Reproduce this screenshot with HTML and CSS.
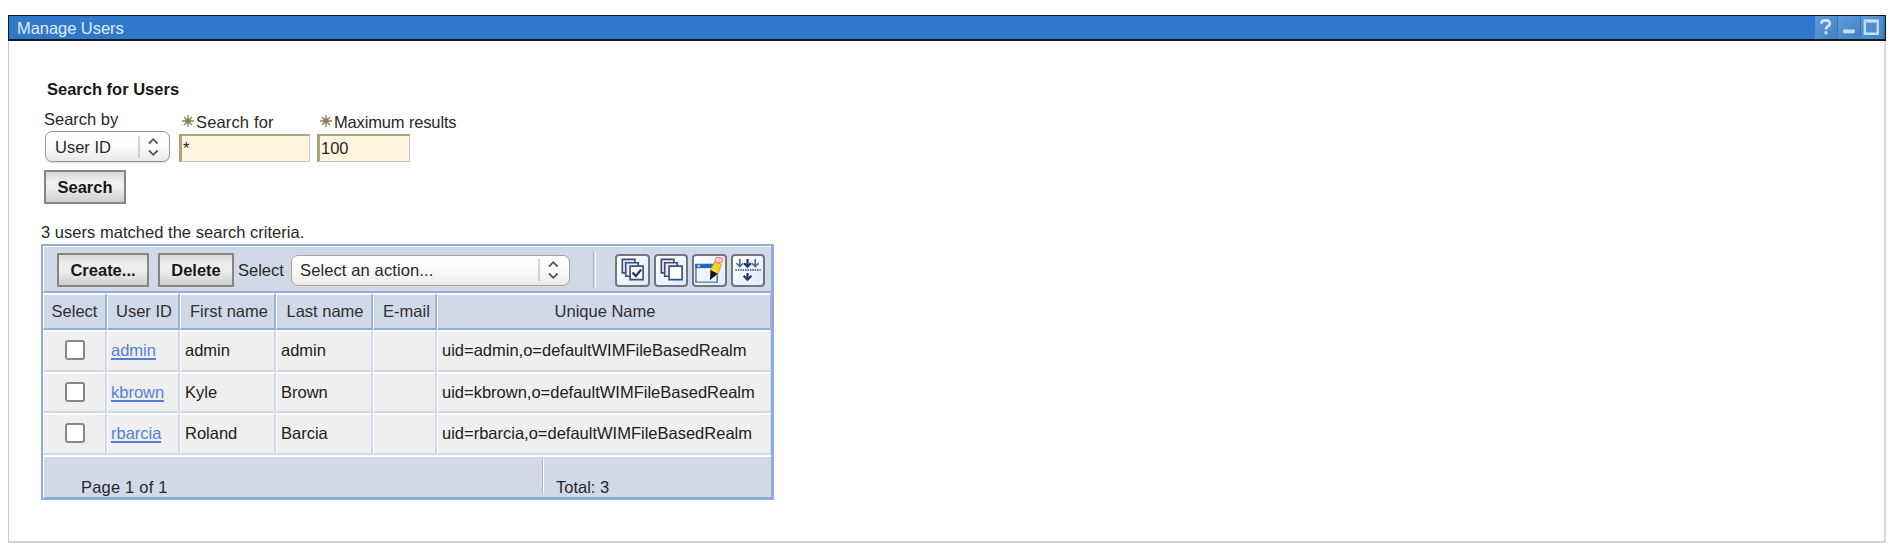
FILE: index.html
```html
<!DOCTYPE html>
<html lang="en">
<head>
<meta charset="utf-8">
<title>Manage Users</title>
<link rel="stylesheet" href="styles.css">
</head>
<body>
<section class="portlet">
  <header class="titlebar">
    <h1 class="title">Manage Users</h1>
    <div class="window-buttons">
      <svg class="wbtn" viewBox="0 0 22 24"><path d="M6.500 8 V6 Q7.500 4.500 10.500 4.500 Q15 4.500 15 8 Q15 9.500 12.500 11 Q11 12 11 14" fill="none" stroke="#d5e5f6" stroke-width="2.800"/><path d="M9.500 16h3v3h-3z" fill="#d5e5f6"/></svg>
      <svg class="wbtn" viewBox="0 0 22 24"><rect x="5" y="14" width="12" height="4" rx=".5" fill="#c9def4"/></svg>
      <svg class="wbtn" viewBox="0 0 22 24"><path d="M3.500 5.500h13.500v13h-13.500z" fill="none" stroke="#c9def4" stroke-width="2.400"/><path d="M2.500 5h15.500" stroke="#c9def4" stroke-width="3"/></svg>
    </div>
  </header>
  <main class="content">
    <h2 class="heading">Search for Users</h2>
    <form class="search">
      <div class="field field-by">
        <label class="label">Search by</label>
        <div class="dropdown"><span class="value">User ID</span><svg class="arrows" viewBox="0 0 32 28"><path d="M2 3v22" stroke="#aaa"/><path d="M12 10.500l4.300-4.300 4.300 4.300M12 17.500l4.300 4.300 4.300-4.300" fill="none" stroke="#555" stroke-width="1.800"/></svg></div>
      </div>
      <div class="field field-for">
        <label class="label required"><svg class="star" viewBox="0 0 12 12"><path d="M6 0v12M0 6h12M2 2l8 8M10 2l-8 8" stroke="#8d8559" stroke-width="1.300"/><circle cx="6" cy="6" r="2.800" fill="#8d8559"/></svg><span class="for-text">Search for</span></label>
        <div class="input">*</div>
      </div>
      <div class="field field-max">
        <label class="label required"><svg class="star" viewBox="0 0 12 12"><path d="M6 0v12M0 6h12M2 2l8 8M10 2l-8 8" stroke="#8d8559" stroke-width="1.300"/><circle cx="6" cy="6" r="2.800" fill="#8d8559"/></svg><span class="max-text">Maximum results</span></label>
        <div class="input input-max">100</div>
      </div>
    </form>
    <button class="button button-search">Search</button>
    <p class="summary">3 users matched the search criteria.</p>
    <div class="table">
      <div class="toolbar">
        <button class="button button-create">Create...</button>
        <button class="button button-delete">Delete</button>
        <span class="select-label">Select</span>
        <div class="dropdown dropdown-action"><span class="value">Select an action...</span><svg class="arrows" viewBox="0 0 32 28"><path d="M2 3v22" stroke="#aaa"/><path d="M12 10.500l4.300-4.300 4.300 4.300M12 17.500l4.300 4.300 4.300-4.300" fill="none" stroke="#555" stroke-width="1.800"/></svg></div>
        <span class="divider"></span>
        <div class="tools">
          <span class="tool"><svg viewBox="0 0 30 30"><g fill="#e9eefa" stroke="#3a4d78" stroke-width="1.700"><path d="M5 3.500h13v14H5z"/><path d="M8.500 7h13v14h-13z"/><path d="M13 10.500h13.500v14H13z" fill="#fff"/></g><path d="M15.500 17l3.500 3.800 5.500-6.800" fill="none" stroke="#26365f" stroke-width="2.300"/></svg></span>
          <span class="tool"><svg viewBox="0 0 30 30"><g fill="#e9eefa" stroke="#3a4d78" stroke-width="1.700"><path d="M5 3.500h13v14H5z"/><path d="M8.500 7h13v14h-13z"/><path d="M13 10.500h13.500v14H13z" fill="#fff"/></g></svg></span>
          <span class="tool"><svg viewBox="0 0 30 30"><path d="M1.500 9h22v18h-22z" fill="#eef4fc" stroke="#5d6ba5" stroke-width="1.500"/><path d="M.8 8h20v4.500H.8z" fill="#1767d2"/><path d="M3 9h3v2.500H3z" fill="#f4bd50"/><path d="M16.500 14.500l5-9.500 6.500 4-4 10-4 2z" fill="#f5d51d" stroke="#c3a42f"/><path d="M16.500 14.500l7.500 3.500-8 7z" fill="#16161b"/><path d="M18 13l5.500 3.500" stroke="#f5df45" stroke-width="2.500"/><rect x="21.500" y="1.500" width="7.500" height="5.500" rx="2" fill="#f9caca" stroke="#e47780"/></svg></span>
          <span class="tool"><svg viewBox="0 0 30 30"><g fill="none" stroke="#566a96" stroke-width="1.800"><path d="M6.500 3v8M3 7.500l3.500 3.500 3.500-3.500M22.500 3v8M19 7.500l3.500 3.500 3.500-3.500"/><path d="M14.500 3v8M11 7.500l3.500 3.500 3.500-3.500M14.500 17.500v7.500M10.500 20.500l4 4 4-4" stroke="#243b6e" stroke-width="2.300"/><path d="M2 14.500h26" stroke="#243b6e" stroke-dasharray="1.500 1" stroke-width="1.500"/></g></svg></span>
        </div>
      </div>
      <div class="row head">
        <div class="cell c">Select</div><div class="cell c h-id">User ID</div><div class="cell c h-first">First name</div><div class="cell c h-last">Last name</div><div class="cell c h-mail">E-mail</div><div class="cell c h-last">Unique Name</div>
      </div>
      <div class="row">
        <div class="cell c"><span class="check"></span></div><div class="cell"><a class="link">admin</a></div><div class="cell">admin</div><div class="cell">admin</div><div class="cell"></div><div class="cell">uid=admin,o=defaultWIMFileBasedRealm</div>
      </div>
      <div class="row">
        <div class="cell c"><span class="check"></span></div><div class="cell"><a class="link">kbrown</a></div><div class="cell">Kyle</div><div class="cell">Brown</div><div class="cell"></div><div class="cell">uid=kbrown,o=defaultWIMFileBasedRealm</div>
      </div>
      <div class="row">
        <div class="cell c"><span class="check"></span></div><div class="cell"><a class="link">rbarcia</a></div><div class="cell">Roland</div><div class="cell">Barcia</div><div class="cell"></div><div class="cell">uid=rbarcia,o=defaultWIMFileBasedRealm</div>
      </div>
      <div class="footer">
        <span class="page">Page 1 of 1</span>
        <span class="total">Total: 3</span>
      </div>
    </div>
  </main>
</section>
</body>
</html>
```
FILE: styles.css
```css
* { box-sizing: border-box; }
body { margin: 0; background: #fff; color: #282828; font: 16.5px/20px "Liberation Sans", Arial, sans-serif; }
h1, h2, p { margin: 0; font-size: inherit; }
.portlet { margin: 15px 9px 0 8px; width: 1878px; height: 528px; border-bottom: 2px solid #d2d2d2; }
.titlebar { height: 26px; background: #3078c9; border: 1px solid #101a20; border-bottom-width: 2px; display: flex; justify-content: space-between; padding: 0 2px 0 8px; }
.title { font-weight: normal; color: #e0ecf8; line-height: 23px; padding-top: 1px; letter-spacing: -.05px; }
.window-buttons { display: flex; gap: 1px; }
.wbtn { width: 22px; height: 23px; background: linear-gradient(135deg, #5d9ada, #4482c0); }
.content { height: 500px; border-left: 1px solid #c8c8c8; border-right: 2px solid #dadada; padding: 38px 0 0 32px; }
.heading { font-weight: bold; color: #181818; padding-left: 6px; height: 29px; }
.search { display: flex; height: 54px; padding-left: 3px; }
.field { display: flex; flex-direction: column; }
.field-by { width: 135px; padding-top: 1px; }
.field-for { width: 138px; padding-top: 4px; }
.field-max { width: 160px; padding-top: 4px; }
.label { display: flex; flex: none; height: 22px; white-space: nowrap; }
.required { padding-left: 3px; gap: 2px; }
.for-text { letter-spacing: .15px; }
.max-text { letter-spacing: -.15px; }
.star { width: 12px; height: 12px; margin-top: 3px; }
.dropdown { display: flex; flex: none; justify-content: space-between; width: 125px; height: 31px; margin-left: 1px; border: 1.5px solid #98948f; border-radius: 7px; background: linear-gradient(#fff, #fcfcfc 45%, #ebeae9); padding: 1px 0 0 9px; line-height: 29px; box-shadow: 0 1px 1px #ddd; }
.arrows { width: 32px; height: 28px; }
.input { flex: none; width: 131px; height: 28px; background: #fff5df; border: solid #a5a57e; border-width: 2px 1px 1px 3px; border-right-color: #c8c4b8; border-bottom-color: #c8c4b8; padding: 0 0 0 1px; line-height: 25px; }
.input-max { width: 93px; }
.button { display: block; height: 34px; padding: 0; border: 2px solid #858585; background: linear-gradient(#d9d9d9, #efefef 35%, #ececec 55%, #cecece); color: #181818; font: bold 16.5px/29px "Liberation Sans", Arial, sans-serif; }
.button-search { width: 82px; margin: 8px 0 0 3px; }
.summary { margin: 18px 0 0; letter-spacing: .03px; }
.table { width: 733px; height: 256px; margin-top: 2px; border: 2px solid #8faddb; border-right-width: 3px; border-bottom-width: 3px; background: #d1d8e8; }
.toolbar { display: flex; height: 47px; border: solid #fff; border-width: 1px 0 0 1px; border-bottom: 2px solid #8faddb; padding-top: 6px; padding-left: 13px; }
.button-create { width: 92px; }
.button-delete { width: 76px; margin-left: 9px; }
.select-label { margin-left: 4px; width: 53px; line-height: 34px; }
.dropdown-action { width: 279px; margin: 2px 0 0; padding: 0 0 0 8px; border-color: #aaa19d; line-height: 28px; }
.dropdown-action .value { letter-spacing: .12px; }
.divider { width: 3px; height: 36px; margin-left: 23px; border-left: 1px solid #9eb5da; border-right: 1px solid #fff; margin-top: -1px; }
.tools { display: flex; gap: 4px; padding: 1px 0 0 19px; }
.tool { width: 34.5px; height: 33px; border: 2px solid #71757d; border-radius: 4px; background: linear-gradient(135deg, #fff, #dcecfa); display: grid; }
.tool svg { width: 30px; height: 29px; }
.row { display: grid; grid-template-columns: 64px 73px 96px 97px 64px 1fr; height: 41.5px; color: #202020; }
.head { height: 37px; color: #303030; }
.cell { background: #efefef; border: 2px solid #fff; border-right: 2px solid #d0daed; border-bottom: 2px solid #d0daed; border-left-width: 1px; padding: 0 0 0 4px; line-height: 37px; white-space: nowrap; }
.cell:last-child { border-right-width: 1px; }
.head .cell { background: #d1d8e8; border-right-color: #9bb4df; border-bottom-color: #8faddb; line-height: 33px; }
.cell.c { text-align: center; padding: 0; }
.head .h-id { padding-left: 2px; }
.head .h-first { padding-left: 3px; }
.head .h-last { padding-left: 2px; }
.head .h-mail { padding-left: 4px; }
.check { display: block; width: 20px; height: 20px; margin: 8px auto; background: #fff; border: 2px solid #8b8780; border-radius: 3px; }
.link { color: #557fd6; border-bottom: 2px solid #557fd6; display: inline-block; line-height: 16px; margin-left: -1px; }
.footer { display: flex; height: 43px; border-top: 2px solid #fff; border-left: 1px solid #fff; }
.page { width: 498px; padding: 20px 0 0 37px; letter-spacing: .2px; }
.total { height: 36px; margin-top: 1px; border-left: 1px solid #9eb5da; box-shadow: inset 1px 0 #fff; padding: 19px 0 0 13px; }
```
